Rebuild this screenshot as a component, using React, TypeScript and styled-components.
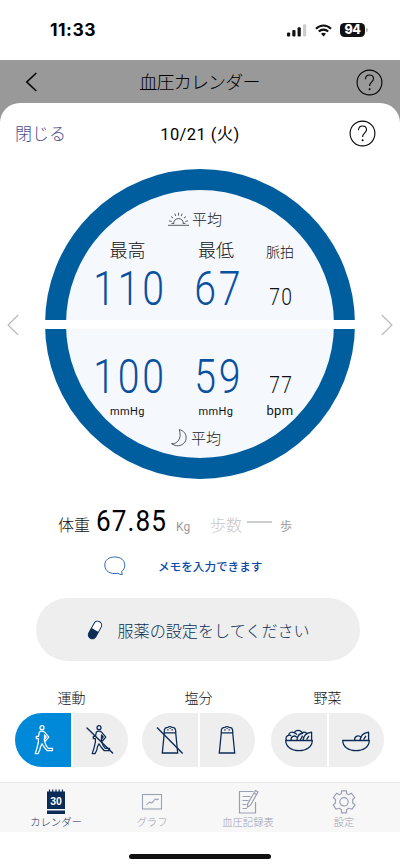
import React from "react";
import styled, { createGlobalStyle } from "styled-components";

const Global = createGlobalStyle`
  * { box-sizing: border-box; }
  body { margin: 0; background: #fff; }
  svg { display: block; flex: none; }
`;

const jp = `"Noto Sans CJK JP", sans-serif`;
const din = `Roboto, "Noto Sans CJK JP", sans-serif`;

const Screen = styled.div`
  width: 400px;
  height: 867px;
  display: flex;
  flex-direction: column;
  overflow: hidden;
  background: #fff;
  color: #111;
  font-family: ${jp};
`;

const StatusBar = styled.div`
  height: 60px;
  flex: none;
  display: flex;
  justify-content: space-between;
  align-items: center;
  padding: 0 32px 0 50px;
`;
const Clock = styled.span`
  font: 700 17.500px/20px Inter, sans-serif;
  letter-spacing: 0.5px;
  color: #000;
`;
const StatusIcons = styled.div`
  display: flex;
  align-items: center;
  gap: 8px;
`;
const Battery = styled.div`
  display: flex;
  align-items: center;
  gap: 1px;
`;
const BatteryBody = styled.span`
  width: 25px;
  height: 14px;
  border-radius: 4.500px;
  background: #111;
  color: #fff;
  font: 800 12.500px/14px Inter, sans-serif;
  letter-spacing: -0.4px;
  text-align: center;
`;
const BatteryCap = styled.span`
  width: 2px;
  height: 4px;
  border-radius: 0 2px 2px 0;
  background: #bbb;
`;

const Header = styled.header`
  height: 63px;
  flex: none;
  background: #999;
  display: flex;
  justify-content: space-between;
  align-items: flex-start;
  padding: 9px 17px 0 25px;
`;
const HeaderTitle = styled.h1`
  margin: 0 0 0 2px;
  font: 300 18px/25px ${jp};
  letter-spacing: -0.8px;
  color: #000;
  white-space: nowrap;
`;
const BackSlot = styled.div`
  padding-top: 3px;
  width: 16px;
`;

const Sheet = styled.main`
  height: 679px;
  flex: none;
  margin-top: -20px;
  background: #fff;
  border-radius: 20px 20px 0 0;
  display: flex;
  flex-direction: column;
`;
const SheetTop = styled.div`
  height: 66px;
  flex: none;
  display: grid;
  grid-template-columns: 100px 200px 100px;
  align-items: start;
  padding-top: 17px;
`;
const CloseButton = styled.button`
  border: 0;
  background: none;
  padding: 0 0 0 15px;
  text-align: left;
  font: 300 17px/26px ${jp};
  color: #4a4e8c;
`;
const DateTitle = styled.h2`
  margin: 0;
  text-align: center;
  font: 400 16.500px/29px ${din};
  letter-spacing: 0.4px;
  color: #000;
`;
const HelpSlot = styled.div`
  padding-left: 49px;
`;

const DialRow = styled.div`
  height: 310px;
  flex: none;
  display: flex;
  justify-content: space-between;
  align-items: center;
  padding: 0 7px;
`;
const Dial = styled.section`
  width: 310px;
  height: 310px;
  border: 21.5px solid #005e9f;
  border-radius: 50%;
  background: #f5f9fd;
  display: flex;
  flex-direction: column;
`;
const DialGap = styled.div`
  height: 8.5px;
  flex: none;
  margin: 0 -23px;
  background: #fff;
`;
const MorningHalf = styled.div`
  height: 130px;
  padding-top: 18px;
`;
const NightHalf = styled.div`
  height: 129px;
  padding-top: 21px;
`;
const AverageLabel = styled.div<{ $left: number }>`
  display: flex;
  align-items: center;
  padding-left: ${(p) => p.$left}px;
  gap: 3px;
  height: 22px;
  font: 300 15px/22px ${jp};
  color: #222;
`;
const Columns = styled.div<{ $top?: number }>`
  display: grid;
  grid-template-columns: 89px 88px 40px;
  margin-left: 17px;
  margin-top: ${(p) => p.$top ?? 0}px;
  text-align: center;
  align-items: baseline;
  justify-items: center;
`;
const Label = styled.span<{ $small?: boolean }>`
  font: 300 ${(p) => (p.$small ? 14 : 18)}px/27px ${jp};
`;
const Big = styled.span`
  font: 300 49px/53px ${din};
  color: #0a50a1;
  letter-spacing: 3.500px;
  margin-right: -5.500px;
  transform: scaleX(0.8);
`;
const Small = styled.span`
  font: 300 23px/26px ${din};
  letter-spacing: 1.500px;
  margin-right: -2px;
  transform: scaleX(0.84);
`;
const Unit = styled.span<{ $large?: boolean }>`
  font: 400 ${(p) => (p.$large ? 13 : 11)}px/16px ${din};
  letter-spacing: 0.4px;
`;
const NightAverage = styled.div`
  margin-top: 7px;
`;

const BodyStats = styled.div`
  height: 32px;
  flex: none;
  margin-top: 26px;
  padding-left: 58px;
  display: flex;
  align-items: baseline;
  white-space: nowrap;
`;
const StatName = styled.span<{ $muted?: boolean }>`
  font: 300 16px/32px ${jp};
  color: ${(p) => (p.$muted ? "#c8c8c8" : "#111")};
  width: ${(p) => (p.$muted ? 37 : 38)}px;
`;
const Weight = styled.span`
  font: 400 29px/32px ${din};
  letter-spacing: 1.200px;
  width: 80px;
  color: #000;
  transform: scaleX(0.9);
  transform-origin: left;
`;
const StatUnit = styled.span<{ $width: number }>`
  font: 400 12px/20px ${din};
  color: #999;
  width: ${(p) => p.$width}px;
`;
const Dash = styled.span`
  width: 25px;
  height: 2px;
  margin: 2px 8px 0 0;
  background: #ccc;
  align-self: center;
`;

const Memo = styled.button`
  height: 24px;
  flex: none;
  margin-top: 17px;
  padding: 0 0 0 104px;
  border: 0;
  background: none;
  display: flex;
  align-items: center;
  gap: 32px;
  font: 500 11.6px/24px ${jp};
  color: #0746a6;
`;
const Medicine = styled.button`
  width: 324px;
  height: 63px;
  flex: none;
  margin: 20px 0 0 35.500px;
  padding: 0 0 0 51px;
  border: 0;
  border-radius: 32px;
  background: #eee;
  display: flex;
  align-items: center;
  gap: 15px;
  font: 300 16.1px/24px ${jp};
  color: #0c2e55;
`;

const Habits = styled.div`
  display: grid;
  grid-template-columns: 127px 129px 114px;
  margin: 26px 0 0 15px;
`;
const Habit = styled.div`
  width: 113px;
`;
const HabitName = styled.div`
  height: 26px;
  text-align: center;
  font: 300 14px/20px ${jp};
  color: #111;
`;
const Toggle = styled.div`
  display: grid;
  grid-template-columns: 1fr 1fr;
  gap: 2px;
  height: 54px;
  border-radius: 27px;
  overflow: hidden;
`;
const Option = styled.button<{ $on?: boolean }>`
  border: 0;
  padding: 0;
  display: grid;
  place-items: center;
  background: ${(p) => (p.$on ? "#0089d8" : "#eee")};
  color: ${(p) => (p.$on ? "#fff" : "#0b2c57")};
`;

const TabBar = styled.nav`
  height: 50px;
  flex: none;
  border-top: 1px solid #e6e6e8;
  background: #f7f7f7;
  display: grid;
  grid-template-columns: repeat(4, 96px);
  padding: 0 8px;
`;
const Tab = styled.a<{ $on?: boolean }>`
  display: flex;
  flex-direction: column;
  align-items: center;
  padding-top: 5px;
  font: 300 10.3px/14px ${jp};
  color: ${(p) => (p.$on ? "#0b2c57" : "#9ba0b5")};
  gap: 0;
  white-space: nowrap;
`;
const HomeBar = styled.div`
  width: 142px;
  height: 5px;
  margin: 21.500px 0 0 129px;
  border-radius: 3px;
  background: #111;
`;

const Help = () => (
  <svg width="27" height="27" viewBox="0 0 27 27" fill="none" stroke="#000" strokeWidth="1.1">
    <circle cx="13.5" cy="13.5" r="12.4" />
    <path d="M9.5 10.2c0-2.7 1.6-4.2 4-4.2s4 1.5 4 3.7c0 3-3.9 3.4-3.9 7.2" />
    <circle cx="13.6" cy="20.3" r="1" fill="#000" stroke="none" />
  </svg>
);

const Chevron = ({ flip }: { flip?: boolean }) => (
  <svg width="12" height="22" viewBox="0 0 12 22" fill="none" stroke="#b5b5b5" strokeWidth="1.1">
    <path d={flip ? "M.8 2 11 12 .8 22" : "M11.2 2 1 12 11.2 22"} />
  </svg>
);

const Runner = ({ off }: { off?: boolean }) => (
  <svg width="30" height="34" viewBox="0 0 30 34" fill="none" stroke="currentColor" strokeWidth="1.25" strokeLinejoin="round" strokeLinecap="round">
    <circle cx="14" cy="4.700" r="2" />
    <path d="M11.300 9.200c1.300-1.400 4-1.400 5.300 0l4.200 4.900-3.400 3.900-1.300-1.200 2.100-2.800-1.700-2v6.100l1.500 4.300 2.200 2.900h4.300v2.200h-5.400l-3.100-3.500-2-3.300-1.500 3-.8 3.600-1.700 3.300H7.200l1.800-5.600 1.400-6v-3.400H8.300v-2.200h2.200z" />
    {off && <path strokeWidth="1.4" d="m2 5 25.600 25" />}
  </svg>
);

const Shaker = ({ off }: { off?: boolean }) => (
  <svg width="30" height="34" viewBox="0 0 30 34" fill="none" stroke="currentColor" strokeWidth="1.3">
    <path d="M9.300 9.800 7.300 30h15.400l-2-20.200z" />
    <path d="M9.300 9.800V8c0-2.500 1.800-3.700 3.700-3.700 1-.9 3-.9 4 0 1.900 0 3.700 1.200 3.700 3.700v1.800M12.200 6.800h1.400m2.900 0h1.400M14.400 5.400h1.300" />
    {off && <path strokeWidth="1.4" d="m2 4.500 25.700 26" />}
  </svg>
);

const Bowl = ({ full }: { full?: boolean }) => (
  <svg width="30" height="34" viewBox="0 0 30 34" fill="none" stroke="currentColor" strokeWidth="1.3" strokeLinejoin="round">
    <path d="M1.700 17.500h26.600c-.2 6.400-5.800 10.200-13.300 10.200S1.900 23.900 1.700 17.500z" />
    <path d="M19 17.400c.4-4.500 3.400-7.400 8.600-8.200v8.200M22.600 16.700l2.300-3.800" />
    {full ? (
      <>
        <path d="M2.500 17.400c-1.300-2.800.1-4.700 2.200-5-.2-2.700 3-4.200 5.500-2.600 1.400-3.400 6.600-3.200 7.700-.2 2.600-1 4.200-.6 5.300 1.400" />
        <path d="M4.700 12.400c1.100-.5 2 0 2.400.6M7.200 17.200c-.8-3.800 3.500-5.500 5.600-2.800M13 17.300c.2-4.500 2.900-6.900 6.300-7.300M10.200 9.800c1.400.2 2.200.8 2.600 2M16.200 17.200l2.400-4.600" />
      </>
    ) : (
      <path d="M13.700 17.300c-.6-4.500 4.200-5.500 6.500-2.800" />
    )}
  </svg>
);

export default function App() {
  return (
    <Screen>
      <Global />
      <StatusBar>
        <Clock>11:33</Clock>
        <StatusIcons>
          <svg width="20" height="13" viewBox="0 0 20 13">
            <rect x="0" y="8.5" width="3.2" height="4" rx="1" fill="#111" />
            <rect x="5.3" y="6" width="3.2" height="6.5" rx="1" fill="#111" />
            <rect x="10.6" y="3.3" width="3.2" height="9.2" rx="1" fill="#111" />
            <rect x="16" y="0.3" width="3.2" height="12.2" rx="1" fill="#ccc" />
          </svg>
          <svg width="17" height="13" viewBox="0 0 17 13" fill="none" stroke="#111" strokeWidth="2.1">
            <path d="M1 4.7c4.3-4.3 10.7-4.3 15 0M3.8 7.6c2.7-2.6 6.7-2.6 9.4 0" />
            <path d="M6 9.8c1.6-1.3 3.4-1.3 5 0l-2.5 2.7z" fill="#111" stroke="none" />
          </svg>
          <Battery>
            <BatteryBody>94</BatteryBody>
            <BatteryCap />
          </Battery>
        </StatusIcons>
      </StatusBar>

      <Header>
        <BackSlot>
          <svg width="13" height="20" viewBox="0 0 13 20" fill="none" stroke="#000" strokeWidth="1.6">
            <path d="M11.3 1 1.8 10l9.5 9" />
          </svg>
        </BackSlot>
        <HeaderTitle>血圧カレンダー</HeaderTitle>
        <Help />
      </Header>

      <Sheet>
        <SheetTop>
          <CloseButton>閉じる</CloseButton>
          <DateTitle>10/21 (火)</DateTitle>
          <HelpSlot>
            <Help />
          </HelpSlot>
        </SheetTop>

        <DialRow>
          <Chevron />
          <Dial>
            <MorningHalf>
              <AverageLabel $left={102}>
                <svg width="21" height="14" viewBox="0 0 21 14" fill="none" stroke="#333" strokeWidth=".8">
                  <path d="M0 13.300h21M5.700 11.400c0-6.400 9.600-6.400 9.600 0M10.500 .8v2.800M6.800 1.600l1 2.400M14.200 1.600l-1 2.400M3 4.500l2 1.600M18 4.500l-2 1.600M1 8.800l2.600.6M20 8.800l-2.600.6M3.500 11.400h2.700M14.800 11.400h2.700" />
                </svg>
                平均
              </AverageLabel>
              <Columns $top={6}>
                <Label>最高</Label>
                <Label>最低</Label>
                <Label $small>脈拍</Label>
              </Columns>
              <Columns $top={-3}>
                <Big>110</Big>
                <Big>67</Big>
                <Small>70</Small>
              </Columns>
            </MorningHalf>
            <DialGap />
            <NightHalf>
              <Columns>
                <Big>100</Big>
                <Big>59</Big>
                <Small>77</Small>
              </Columns>
              <Columns>
                <Unit>mmHg</Unit>
                <Unit>mmHg</Unit>
                <Unit $large>bpm</Unit>
              </Columns>
              <NightAverage>
                <AverageLabel $left={105}>
                  <svg width="17" height="18" viewBox="0 0 17 18" fill="none" stroke="#333" strokeWidth=".8">
                    <path d="M8.3.6c4.5 1 7.4 4.6 6.8 9.2C14.4 15.7 6.900 19.300.6 14.700c5.900.4 10.500-5.300 7.700-14.100z" />
                  </svg>
                  平均
                </AverageLabel>
              </NightAverage>
            </NightHalf>
          </Dial>
          <Chevron flip />
        </DialRow>

        <BodyStats>
          <StatName>体重</StatName>
          <Weight>67.85</Weight>
          <StatUnit $width={34}>Kg</StatUnit>
          <StatName $muted>歩数</StatName>
          <Dash />
          <StatUnit $width={14}>歩</StatUnit>
        </BodyStats>

        <Memo>
          <svg width="22" height="20" viewBox="0 0 22 20" fill="none" stroke="#2a67b8" strokeWidth="1">
            <path d="M18.300 18.500c-1.900.1-3.300-.3-4.500-1.200C6 18.700.8 14.800.8 9.200.8 4 4.600 1 10.700 1s10.100 3.200 10.100 8.200c0 2.700-1.100 4.900-3.200 6.400z" />
          </svg>
          メモを入力できます
        </Memo>

        <Medicine>
          <svg width="16" height="22" viewBox="0 0 16 22">
            <g transform="rotate(29 8 11)">
              <rect x="4" y="1.500" width="8" height="19" rx="4" fill="#fff" stroke="#0c2e55" strokeWidth="1" />
              <path d="M4 11h8v5.500a4 4 0 0 1-8 0z" fill="#0c2e55" />
            </g>
          </svg>
          服薬の設定をしてください
        </Medicine>

        <Habits>
          <Habit>
            <HabitName>運動</HabitName>
            <Toggle>
              <Option $on><Runner /></Option>
              <Option><Runner off /></Option>
            </Toggle>
          </Habit>
          <Habit>
            <HabitName>塩分</HabitName>
            <Toggle>
              <Option><Shaker off /></Option>
              <Option><Shaker /></Option>
            </Toggle>
          </Habit>
          <Habit>
            <HabitName>野菜</HabitName>
            <Toggle>
              <Option><Bowl full /></Option>
              <Option><Bowl /></Option>
            </Toggle>
          </Habit>
        </Habits>
      </Sheet>

      <TabBar>
        <Tab $on>
          <svg width="26" height="27" viewBox="0 0 26 27">
            <path d="M4 3.500h18V21H4zM4 22.500h18V26H4z" fill="#0b2c57" />
            <path d="M6.500 1.500v3m3.200-3v3m3.300-3v3m3.200-3v3m3.300-3v3" stroke="#0b2c57" strokeWidth="1.200" />
            <text x="13" y="16.500" textAnchor="middle" fill="#fff" fontFamily="Liberation Sans, sans-serif" fontWeight="700" fontSize="10.500">30</text>
          </svg>
          カレンダー
        </Tab>
        <Tab>
          <svg width="26" height="27" viewBox="0 0 26 27" fill="none" stroke="#9ba0b5" strokeWidth="1.100">
            <rect x="3.500" y="6.500" width="19" height="14.500" />
            <path d="m7.500 16.800 3-2.600 2.300.8 3.500-4.100 1.500 1 1.800-1.200" />
          </svg>
          グラフ
        </Tab>
        <Tab>
          <svg width="26" height="27" viewBox="0 0 26 27" fill="none" stroke="#9ba0b5" strokeWidth="1.200">
            <path d="M18.500 3.500h-14v21.500h16V14M7.500 8.500h8M7.500 12.500h6M7.500 16.500h4M7.500 20.500h4.500" />
            <path d="M20.500 2.500 23 4l-7.500 13.200-3 2 .2-3.500zM19 5l2.600 1.500" />
          </svg>
          血圧記録表
        </Tab>
        <Tab>
          <svg width="26" height="27" viewBox="0 0 26 27" fill="none" stroke="#9ba0b5" strokeWidth="1.200" strokeLinejoin="round">
            <path d="M10.500 5.500V2.900h5v2.600l2.300 1.200 2.500-1.500 3.400 4.300-2 2v3.500l2.300 1.900-3 4.300-3-1-2.500 1.600v3h-5v-3l-2.500-1.500-3 .9-2.800-4.300 2.300-1.900v-3.500l-2.200-2 3.400-4.300 2.500 1.500z" />
            <circle cx="13" cy="13.800" r="4.200" />
          </svg>
          設定
        </Tab>
      </TabBar>
      <HomeBar />
    </Screen>
  );
}
